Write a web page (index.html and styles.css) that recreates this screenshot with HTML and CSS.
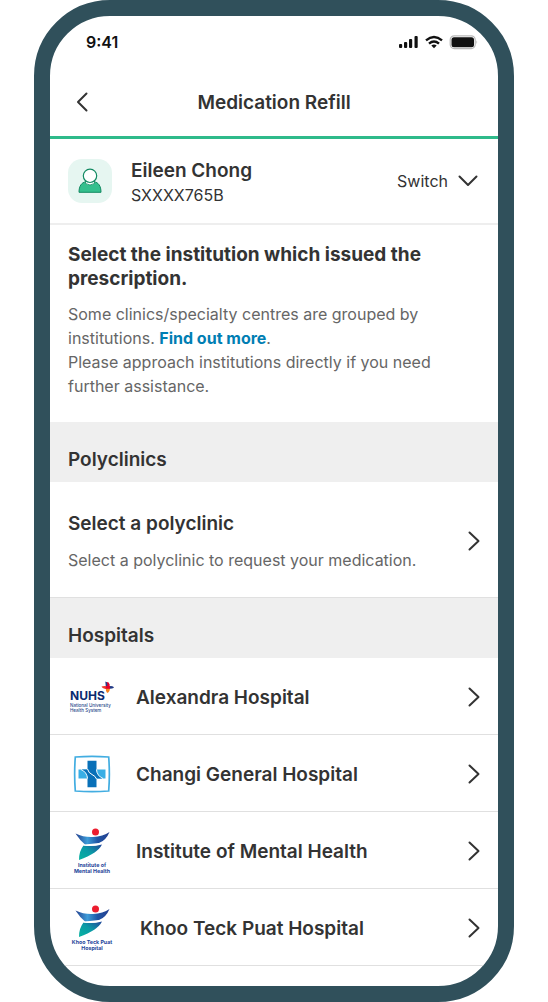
FILE: index.html
```html
<!DOCTYPE html>
<html lang="en">
<head>
<meta charset="utf-8">
<meta name="viewport" content="width=device-width, initial-scale=1">
<title>Medication Refill</title>
<link rel="stylesheet" href="styles.css">
</head>
<body>
<div class="phone">
  <div class="status">
    <span class="time">9:41</span>
    <svg class="status-icons" width="80" height="16" viewBox="0 0 80 16" aria-hidden="true">
      <g fill="#111"><rect x="1" y="10" width="3.200" height="4" rx="1"/><rect x="6" y="8" width="3.200" height="6" rx="1"/><rect x="11" y="5" width="3.200" height="9" rx="1"/><rect x="16.500" y="2" width="3.200" height="12" rx="1"/></g>
      <g fill="none" stroke="#111" stroke-width="2.400"><path d="M28 6.400Q36 -.300 44 6.400"/><path d="M31 9.700Q36 5.500 41 9.700"/></g>
      <path d="M33.300 11.600Q36 9.500 38.700 11.600L36 14.300Z" fill="#111"/>
      <rect x="52.200" y="1.800" width="25" height="12.800" rx="4" fill="none" stroke="#b9b9b9" stroke-width="1.200"/>
      <rect x="53.500" y="3.200" width="22.500" height="10" rx="2.500" fill="#111"/>
      <path d="M78.500 6.200Q80 8.200 78.500 10.200Z" fill="#aaa"/>
    </svg>
  </div>

  <header class="topbar">
    <button class="back" type="button" aria-label="Back"><svg width="12" height="20" viewBox="0 0 12 20"><path d="M10.500 1.500 2 10l8.500 8.500"/></svg></button>
    <h1 class="title">Medication Refill</h1>
  </header>

  <section class="profile">
    <svg class="avatar" width="44" height="44" viewBox="0 0 44 44" aria-hidden="true">
      <rect width="44" height="44" rx="14" fill="#e6f6f1"/>
      <path d="M11 33.300C11 27 13.500 23.500 18 22.700h8c4.500.800 7 4.300 7 10.600Z" fill="#34bf8d" stroke="#128a62" stroke-linejoin="round"/>
      <path d="M17.500 22h9v2.500Q22 27.500 17.500 24.500Z" fill="#fff" stroke="#128a62" stroke-width=".8"/>
      <circle cx="22" cy="16.800" r="6.700" fill="#fff" stroke="#128a62" stroke-width="1.200"/>
    </svg>
    <div class="person">
      <div class="name">Eileen Chong</div>
      <div class="nric">SXXXX765B</div>
    </div>
    <button class="switch" type="button">Switch<svg width="20" height="12" viewBox="0 0 20 12" aria-hidden="true"><path d="m1.500 1.500 8.500 8.500 8.500-8.500"/></svg></button>
  </section>

  <section class="intro">
    <h2 class="lead">Select the institution which issued the prescription.</h2>
    <p class="copy">Some clinics/specialty centres are grouped by institutions. <a class="more" href="#more">Find out more</a>.</p>
    <p class="copy">Please approach institutions directly if you need further assistance.</p>
  </section>

  <h2 class="group">Polyclinics</h2>
  <a class="row row-tall" href="#polyclinic">
    <span class="label">
      <span class="row-name">Select a polyclinic</span>
      <span class="hint">Select a polyclinic to request your medication.</span>
    </span>
    <svg class="chevron" width="12" height="20" viewBox="0 0 12 20" aria-hidden="true"><path d="m1.500 1.500 9 8.500-9 8.500"/></svg>
  </a>

  <h2 class="group">Hospitals</h2>
  <a class="row" href="#alexandra">
    <svg class="logo" width="48" height="48" viewBox="0 0 48 48" aria-hidden="true">
      <text x="2" y="27" font-size="12" font-weight="700" fill="#0b2b70">NUHS</text>
      <text x="2" y="34" font-size="4.500" font-weight="500" fill="#2c4c8c">National University</text>
      <text x="2" y="39" font-size="4.500" font-weight="500" fill="#2c4c8c">Health System</text>
      <path d="M38 9.200q3-.500 3.500 2l.3 2.600H38Z" fill="#e4002b"/>
      <path d="M37.300 8.400q2 .300 2 2.400v3h-1.500Z" fill="#243c87"/>
      <path d="M41 13.200q4.500-.800 5 1.600-2 1.200-5 1Z" fill="#243c87"/>
      <path d="M33.500 13.600q2-.800 5-.400v3q-4-.200-5-2.600Z" fill="#ee3a2b"/>
      <path d="M37.800 15h4q.4 3.500-2.600 5Q37.500 17.500 37.800 15Z" fill="#f58220"/>
      <path d="M37.800 13h4.200v2.800h-4.200Z" fill="#e4002b"/>
    </svg>
    <span class="row-name">Alexandra Hospital</span>
    <svg class="chevron" width="12" height="20" viewBox="0 0 12 20" aria-hidden="true"><path d="m1.500 1.500 9 8.500-9 8.500"/></svg>
  </a>
  <a class="row" href="#changi">
    <svg class="logo" width="48" height="48" viewBox="0 0 48 48" aria-hidden="true">
      <path d="M7.300 7Q24 5.800 40.700 7 42 24 40.700 41 24 42.200 7.300 41 6 24 7.300 7Z" fill="none" stroke="#42ade1" stroke-width="1.700"/>
      <path d="M10.500 19.500H19v9h-8.500Z" fill="#38aee5"/><path d="M29 19.500h8.500v9H29Z" fill="#38aee5"/>
      <path d="M19.500 10.800h9V20q0 5.500 6 8.500h-6v8.700h-9V28q0-5.500-6-8.500h6Z" fill="#0870b8"/>
      <path d="M19.500 19q1 4 4.500 5.500t4.500 4.500" fill="none" stroke="#fff" stroke-width="1"/>
      <path d="M13 19.500q6 2.500 6.500 9M35 28.500q-6-2.500-6.500-9" fill="none" stroke="#fff" stroke-width=".9"/>
    </svg>
    <span class="row-name">Changi General Hospital</span>
    <svg class="chevron" width="12" height="20" viewBox="0 0 12 20" aria-hidden="true"><path d="m1.500 1.500 9 8.500-9 8.500"/></svg>
  </a>
  <a class="row" href="#imh">
    <svg class="logo" width="48" height="48" viewBox="0 0 48 48" aria-hidden="true">
      <defs>
        <linearGradient id="arms"><stop offset="0" stop-color="#243f8f"/><stop offset=".35" stop-color="#3d9cd8"/><stop offset=".65" stop-color="#1f55a5"/><stop offset="1" stop-color="#243f8f"/></linearGradient>
        <linearGradient id="body" x1="0" y1="1" x2="1" y2="0"><stop offset="0" stop-color="#08b3a0"/><stop offset=".5" stop-color="#0a9aa6"/><stop offset="1" stop-color="#24459a"/></linearGradient>
      </defs>
      <circle cx="27.500" cy="5" r="3.500" fill="#ec1c2e"/>
      <path d="M7.500 6.500Q16 10.500 25 10 35 9.500 41.500 5 38 13.500 31 16L17 17.500Q12 13.500 7.500 6.500Z" fill="url(#arms)"/>
      <path d="M15.500 18.500Q25 20 34 17.500 30 26 11 33 11 24 15.500 18.500Z" fill="url(#body)"/>
      <path d="M15.500 18Q24 19.500 33 16.200" fill="none" stroke="#fff" stroke-width="1.200"/>
      <text x="24" y="40" font-size="5.300" font-weight="700" text-anchor="middle" fill="#24459a">Institute of</text>
      <text x="24" y="46" font-size="5.300" font-weight="700" text-anchor="middle" fill="#24459a">Mental Health</text>
    </svg>
    <span class="row-name">Institute of Mental Health</span>
    <svg class="chevron" width="12" height="20" viewBox="0 0 12 20" aria-hidden="true"><path d="m1.500 1.500 9 8.500-9 8.500"/></svg>
  </a>
  <a class="row row-wide" href="#ktph">
    <svg class="logo" width="48" height="48" viewBox="0 0 48 48" aria-hidden="true">
      <circle cx="27.500" cy="5" r="3.500" fill="#ec1c2e"/>
      <path d="M7.500 6.500Q16 10.500 25 10 35 9.500 41.500 5 38 13.500 31 16L17 17.500Q12 13.500 7.500 6.500Z" fill="url(#arms)"/>
      <path d="M15.500 18.500Q25 20 34 17.500 30 26 11 33 11 24 15.500 18.500Z" fill="url(#body)"/>
      <path d="M15.500 18Q24 19.500 33 16.200" fill="none" stroke="#fff" stroke-width="1.200"/>
      <text x="24" y="40" font-size="5.300" font-weight="700" text-anchor="middle" fill="#24459a">Khoo Teck Puat</text>
      <text x="24" y="46" font-size="5.300" font-weight="700" text-anchor="middle" fill="#24459a">Hospital</text>
    </svg>
    <span class="row-name">Khoo Teck Puat Hospital</span>
    <svg class="chevron" width="12" height="20" viewBox="0 0 12 20" aria-hidden="true"><path d="m1.500 1.500 9 8.500-9 8.500"/></svg>
  </a>
</div>
</body>
</html>
```
FILE: styles.css
```css
* { box-sizing: border-box; }
body {
  margin: 0;
  background: #fff;
  color: #333;
  font-family: Inter, "Liberation Sans", sans-serif;
}
h1, h2, p { margin: 0; }
a { color: inherit; text-decoration: none; }
button { border: 0; padding: 0; background: none; color: inherit; font: inherit; cursor: pointer; }
svg { display: block; flex: none; }
.back svg, .switch svg, .chevron { fill: none; stroke: #333; stroke-width: 2; stroke-linecap: round; stroke-linejoin: round; }

.phone {
  max-width: 480px;
  min-height: 100vh;
  margin: 0 auto;
  border: 16px solid #30505b;
  border-radius: 76px;
  overflow: hidden;
}
.status {
  display: flex;
  align-items: center;
  justify-content: space-between;
  height: 52px;
  padding: 0 20px 0 36px;
}
.time { color: #111; font-size: 16px; font-weight: 600; }

.topbar {
  display: grid;
  grid-template-columns: 12px 1fr 12px;
  align-items: center;
  height: 71px;
  padding: 0 26px;
  border-bottom: 3px solid #2fba8a;
}
.title { padding-top: 2px; font-size: 19px; line-height: 24px; font-weight: 600; text-align: center; }

.profile {
  display: flex;
  align-items: center;
  height: 86px;
  padding: 0 20px 0 18px;
  border-bottom: 2px solid #eee;
}
.person { flex: 1; margin-left: 19px; padding-top: 3px; }
.name { font-size: 19px; line-height: 24px; font-weight: 600; }
.nric { font-size: 16px; line-height: 24px; }
.switch { display: flex; align-items: center; gap: 10px; font-size: 16px; }

.intro { padding: 18px 30px 24px 18px; }
.lead { margin-bottom: 11px; font-size: 19px; line-height: 24px; font-weight: 700; }
.copy { color: #666; font-size: 16px; line-height: 24px; }
.more { color: #007eb3; font-weight: 700; }

.group {
  padding: 26px 18px 10px;
  background: #efefef;
  font-size: 19px;
  line-height: 24px;
  font-weight: 600;
}
.row {
  display: flex;
  align-items: center;
  gap: 20px;
  min-height: 77px;
  padding: 2px 18px 0;
  border-bottom: 1px solid #e0e0e0;
}
.row-tall { min-height: 116px; }
.row-wide { gap: 24px; }
.label { display: grid; gap: 12px; flex: 1; padding-top: 1px; }
.row-name { flex: 1; padding-top: 1px; font-size: 19px; line-height: 24px; font-weight: 600; }
.hint { color: #666; font-size: 16px; line-height: 24px; }
```
